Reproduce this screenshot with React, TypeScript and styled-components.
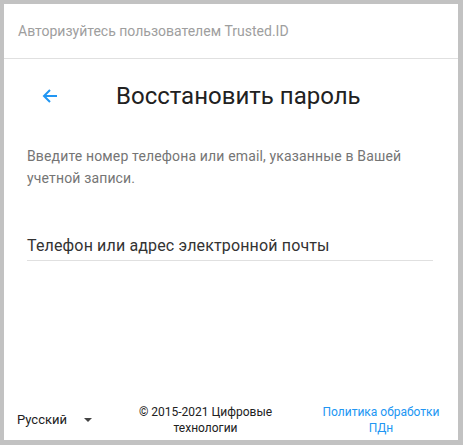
import * as React from 'react';
import styled, { createGlobalStyle } from 'styled-components';

const GlobalStyle = createGlobalStyle`
  html, body {
    margin: 0;
    padding: 0;
    background: #c2c2c2;
  }
  body {
    font-family: Roboto, 'Noto Sans', sans-serif;
  }
`;

const Page = styled.div`
  width: 463px;
  height: 445px;
  padding: 4px 5px 5px 4px;
  box-sizing: border-box;
`;

const Card = styled.main`
  height: 100%;
  background: #fff;
  display: flex;
  flex-direction: column;
`;

const TopBar = styled.header`
  height: 54px;
  border-bottom: 1px solid #e0e0e0;
  display: flex;
  align-items: center;
  padding-left: 14px;
  font-size: 14px;
  color: #9e9e9e;
`;

const TitleRow = styled.div`
  display: flex;
  align-items: center;
  height: 74px;
  padding-left: 34px;
`;

const BackButton = styled.button`
  width: 24px;
  height: 24px;
  padding: 0;
  border: none;
  background: none;
  display: flex;
  align-items: center;
  justify-content: center;
  cursor: pointer;
`;

const Title = styled.h1`
  margin: 0 0 0 54px;
  font-size: 24px;
  font-weight: 400;
  color: #212121;
`;

const Body = styled.section`
  padding: 12px 25px 0 23px;
  flex: 1;
`;

const Hint = styled.p`
  margin: 0;
  font-size: 14px;
  line-height: 22px;
  letter-spacing: 0.15px;
  color: #757575;
`;

const Field = styled.label`
  display: block;
  margin-top: 46px;
  padding-bottom: 3px;
  border-bottom: 1px solid #e0e0e0;
  font-size: 16px;
  line-height: 22px;
  letter-spacing: 0.15px;
  color: #333;
`;

const Footer = styled.footer`
  display: grid;
  grid-template-columns: 80px 177px 134px;
  column-gap: 20px;
  align-items: center;
  padding: 0 0 4px 13px;
  font-size: 12px;
  line-height: 16px;
`;

const Lang = styled.div`
  display: flex;
  align-items: center;
  gap: 17px;
  font-size: 13px;
  color: #212121;
`;

const Caret = styled.span`
  width: 0;
  height: 0;
  border-left: 4px solid transparent;
  border-right: 4px solid transparent;
  border-top: 4px solid #444;
`;

const Copy = styled.div`
  text-align: center;
  color: #212121;
`;

const Policy = styled.a`
  text-align: center;
  color: #2196f3;
  text-decoration: none;
`;

export default function App() {
  return (
    <Page>
      <GlobalStyle />
      <Card>
        <TopBar>Авторизуйтесь пользователем Trusted.ID</TopBar>
        <TitleRow>
          <BackButton aria-label="Назад">
            <svg width="16" height="16" viewBox="0 0 16 16">
              <path d="M15 8H2M8 2L2 8l6 6" fill="none" stroke="#2196f3" strokeWidth="2" />
            </svg>
          </BackButton>
          <Title>Восстановить пароль</Title>
        </TitleRow>
        <Body>
          <Hint>Введите номер телефона или email, указанные в Вашей учетной записи.</Hint>
          <Field>Телефон или адрес электронной почты</Field>
        </Body>
        <Footer>
          <Lang>
            Русский
            <Caret />
          </Lang>
          <Copy>© 2015-2021 Цифровые<br />технологии</Copy>
          <Policy href="#">Политика обработки<br />ПДн</Policy>
        </Footer>
      </Card>
    </Page>
  );
}
